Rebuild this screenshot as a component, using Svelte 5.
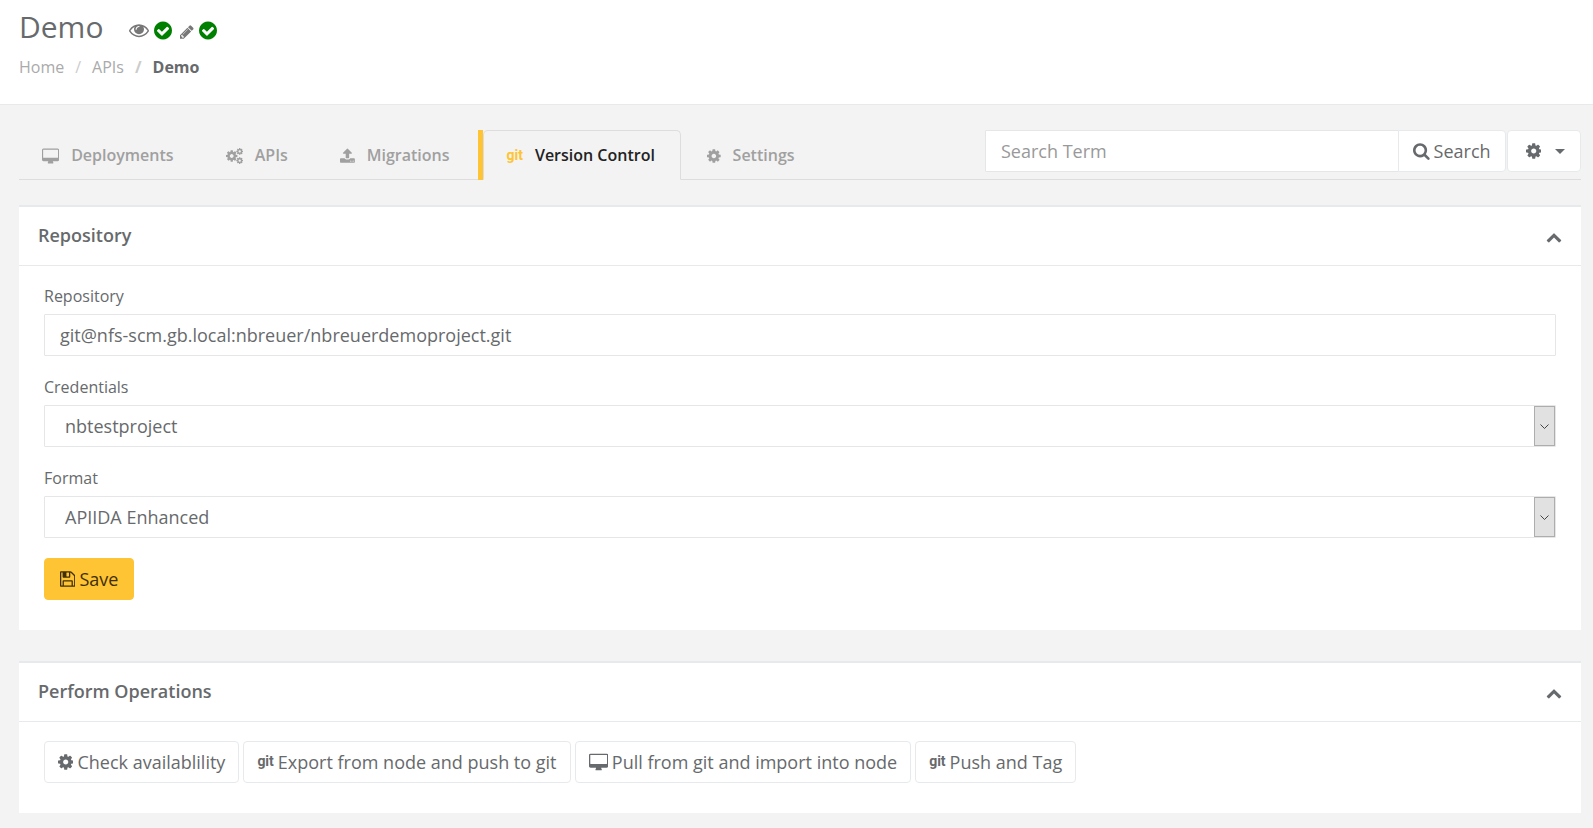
<script>
    const cog = 'M1152 896q0-106-75-181t-181-75-181 75-75 181 75 181 181 75 181-75 75-181zm512-109v222q0 12-8 23t-20 13l-185 28q-19 54-39 91 35 50 107 138 10 12 10 25t-9 23q-27 37-99 108t-94 71q-12 0-26-9l-138-108q-44 23-91 38-16 136-29 186-7 28-36 28h-222q-14 0-24.5-8.5t-11.5-21.5l-28-184q-49-16-90-37l-141 107q-10 9-25 9-14 0-25-11-126-114-165-168-7-10-7-23 0-12 8-23 15-21 51-66.5t54-70.5q-27-50-41-99l-183-27q-13-2-21-12.5t-8-23.5v-222q0-12 8-23t19-13l186-28q14-46 39-92-40-57-107-138-10-12-10-24 0-10 9-23 26-36 98.5-107.5t94.5-71.5q13 0 26 10l138 107q44-23 91-38 16-136 29-186 7-28 36-28h222q14 0 24.5 8.5t11.5 21.5l28 184q49 16 90 37l142-107q9-9 24-9 13 0 25 10 129 119 165 170 7 8 7 22 0 12-8 23-15 21-51 66.5t-54 70.5q26 50 41 98l183 28q13 2 21 12.5t8 23.5z';

    // x = left edge of the glyph, w = its advance, on a 1792 unit high grid
    const icons = {
        cog: { x: 128, w: 1536, d: cog },
        desktop: { x: 0, w: 1920, d: 'M1792 1056v-832q0-13-9.500-22.500t-22.500-9.500h-1600q-13 0-22.500 9.500t-9.500 22.500v832q0 13 9.500 22.500t22.500 9.500h1600q13 0 22.500-9.500t9.500-22.500zm128-832v1088q0 66-47 113t-113 47h-544q0 37 16 77.500t32 71 16 43.500q0 26-19 45t-45 19h-512q-26 0-45-19t-19-45q0-14 16-44t32-70 16-78h-544q-66 0-113-47t-47-113v-1088q0-66 47-113t113-47h1600q66 0 113 47t47 113z' },
        search: { x: 64, w: 1664, d: 'M1216 832q0-185-131.5-316.5t-316.5-131.5-316.5 131.5-131.5 316.5 131.5 316.5 316.5 131.5 316.5-131.5 131.5-316.5zm512 832q0 52-38 90t-90 38q-54 0-90-38l-343-342q-179 124-399 124-143 0-273.5-55.5t-225-150-150-225-55.5-273.5 55.5-273.5 150-225 225-150 273.5-55.5 273.5 55.5 225 150 150 225 55.5 273.5q0 220-124 399l343 343q37 37 37 90z' },
        check: { x: 128, w: 1536, d: 'M1412 734q0-28-18-46l-91-90q-19-19-45-19t-45 19l-408 407-226-226q-19-19-45-19t-45 19l-91 90q-18 18-18 46 0 27 18 45l362 362q19 19 45 19 27 0 46-19l543-543q18-18 18-45zm252 162q0 209-103 385.5t-279.5 279.5-385.5 103-385.5-103-279.5-279.5-103-385.5 103-385.5 279.5-279.5 385.5-103 385.5 103 279.5 279.5 103 385.5z' },
        eye: { x: 0, w: 1792, d: 'M1664 960q-152-236-381-353 61 104 61 225 0 185-131.5 316.5t-316.5 131.5-316.5-131.5-131.5-316.5q0-121 61-225-229 117-381 353 133 205 333.5 326.5t434.500 121.500 434.500-121.500 333.500-326.500zm-720-384q0-20-14-34t-34-14q-125 0-214.500 89.500t-89.500 214.500q0 20 14 34t34 14 34-14 14-34q0-86 61-147t147-61q20 0 34-14t14-34zm848 384q0 34-20 69-140 230-376.500 368.500t-499.500 138.500-499.500-139-376.500-368q-20-35-20-69t20-69q140-229 376.500-368t499.500-139 499.500 139 376.500 368q20 35 20 69z' },
        pencil: { x: 128, w: 1536, d: 'M491 1536l91-91-235-235-91 91v107h128v128h107zm523-928q0-22-22-22-10 0-17 7l-542 542q-7 7-7 17 0 22 22 22 10 0 17-7l542-542q7-7 7-17zm-54-192l416 416-832 832h-416v-416zm683 96q0 53-37 90l-166 166-416-416 166-165q36-38 90-38 53 0 91 38l235 234q37 39 37 91z' },
        upload: { x: 64, w: 1664, d: 'M1344 1472q0-26-19-45t-45-19-45 19-19 45 19 45 45 19 45-19 19-45zm256 0q0-26-19-45t-45-19-45 19-19 45 19 45 45 19 45-19 19-45zm128-224v320q0 40-28 68t-68 28h-1472q-40 0-68-28t-28-68v-320q0-40 28-68t68-28h427q21 56 70.500 92t110.500 36h256q61 0 110.500-36t70.500-92h427q40 0 68 28t28 68zm-325-648q-17 40-59 40h-256v448q0 26-19 45t-45 19h-256q-26 0-45-19t-19-45v-448h-256q-42 0-59-40-17-39 14-69l448-448q18-19 45-19t45 19l448 448q31 30 14 69z' },
        floppy: { x: 128, w: 1536, d: 'M512 1536h768v-384h-768v384zm896 0h128v-896q0-14-10-38.500t-20-34.500l-281-281q-10-10-34-20t-39-10v416q0 40-28 68t-68 28h-576q-40 0-68-28t-28-68v-416h-128v1280h128v-416q0-40 28-68t68-28h832q40 0 68 28t28 68v416zm-384-928v-320q0-13-9.500-22.500t-22.500-9.500h-192q-13 0-22.500 9.500t-9.500 22.500v320q0 13 9.500 22.500t22.500 9.500h192q13 0 22.500-9.500t9.500-22.500zm640 32v928q0 40-28 68t-68 28h-1344q-40 0-68-28t-28-68v-1344q0-40 28-68t68-28h928q40 0 88 20t76 48l280 280q28 28 48 76t20 88z' },
        chevronUp: { x: 0, w: 1792, d: 'M1683 1331l-166 165q-19 19-45 19t-45-19l-531-531-531 531q-19 19-45 19t-45-19l-166-165q-19-19-19-45.500t19-45.500l742-741q19-19 45-19t45 19l742 741q19 19 19 45.500t-19 45.500z' }
    };

    const tabs = [
        { id: 'deployments', label: 'Deployments', icon: 'desktop' },
        { id: 'apis', label: 'APIs', icon: 'cogs' },
        { id: 'migrations', label: 'Migrations', icon: 'upload' },
        { id: 'vcs', label: 'Version Control', icon: 'git' },
        { id: 'settings', label: 'Settings', icon: 'cog' }
    ];

    const operations = [
        { label: 'Check availablility', icon: 'cog' },
        { label: 'Export from node and push to git', icon: 'git' },
        { label: 'Pull from git and import into node', icon: 'desktop' },
        { label: 'Push and Tag', icon: 'git' }
    ];

    let activeTab = $state('vcs');
    let searchTerm = $state('');
    let open = $state({ repository: true, operations: true });
    let repo = $state({
        url: 'git@nfs-scm.gb.local:nbreuer/nbreuerdemoproject.git',
        credentials: 'nbtestproject',
        format: 'APIIDA Enhanced'
    });

    function selectTab(event, id) {
        event.preventDefault();
        activeTab = id;
    }
</script>

{#snippet icon(name)}
    {#if name === 'git'}
        <span class="git-icon" aria-hidden="true">git</span>
    {:else if name === 'cogs'}
        <svg class="icon" viewBox="0 0 1920 1792" aria-hidden="true">
            <path transform="translate(-107 149) scale(.833)" d={cog} />
            <path transform="translate(1088 -64) scale(.5)" d={cog} />
            <path transform="translate(1088 960) scale(.5)" d={cog} />
        </svg>
    {:else}
        <svg class="icon" viewBox="{icons[name].x} 0 {icons[name].w} 1792" aria-hidden="true">
            <path d={icons[name].d} />
        </svg>
    {/if}
{/snippet}

{#snippet selectArrow()}
    <span class="select-arrow" aria-hidden="true">
        <svg viewBox="0 0 9 5" width="9" height="5"><path d="M.5.5l4 4 4-4" /></svg>
    </span>
{/snippet}

<header class="page-heading">
    <div class="title-row">
        <h1>Demo</h1>
        <div class="permissions">
            {@render icon('eye')}
            <span class="granted">{@render icon('check')}</span>
            <span class="edit">{@render icon('pencil')}</span>
            <span class="granted">{@render icon('check')}</span>
        </div>
    </div>
    <nav aria-label="Breadcrumb">
        <ol class="breadcrumb">
            <li><a href="#home">Home</a></li>
            <li><a href="#apis">APIs</a></li>
            <li class="current">Demo</li>
        </ol>
    </nav>
</header>

<main>
    <div class="toolbar">
        <ul class="tabs">
            {#each tabs as tab (tab.id)}
                <li class:active={tab.id === activeTab}>
                    <a href="#{tab.id}" onclick={(e) => selectTab(e, tab.id)}>
                        {@render icon(tab.icon)}
                        {tab.label}
                    </a>
                </li>
            {/each}
        </ul>

        <form class="search-form" onsubmit={(e) => e.preventDefault()}>
            <input type="text" placeholder="Search Term" aria-label="Search Term" bind:value={searchTerm} />
            <button class="btn search-button" type="submit">{@render icon('search')} Search</button>
            <button class="btn options-button" type="button" aria-label="Search options">
                {@render icon('cog')}
                <span class="caret"></span>
            </button>
        </form>
    </div>

    <section class="panel">
        <div class="panel-title">
            <h2>Repository</h2>
            <button class="collapse" aria-label="Toggle Repository" onclick={() => (open.repository = !open.repository)}>
                {@render icon('chevronUp')}
            </button>
        </div>
        {#if open.repository}
            <form class="panel-body" onsubmit={(e) => e.preventDefault()}>
                <div class="form-group">
                    <label for="repo-url">Repository</label>
                    <input id="repo-url" type="text" bind:value={repo.url} />
                </div>
                <div class="form-group">
                    <label for="repo-credentials">Credentials</label>
                    <div class="select-wrap">
                        <select id="repo-credentials" bind:value={repo.credentials}>
                            <option>nbtestproject</option>
                        </select>
                        {@render selectArrow()}
                    </div>
                </div>
                <div class="form-group">
                    <label for="repo-format">Format</label>
                    <div class="select-wrap">
                        <select id="repo-format" bind:value={repo.format}>
                            <option>APIIDA Enhanced</option>
                        </select>
                        {@render selectArrow()}
                    </div>
                </div>
                <button class="btn btn-primary" type="submit">{@render icon('floppy')} Save</button>
            </form>
        {/if}
    </section>

    <section class="panel">
        <div class="panel-title">
            <h2>Perform Operations</h2>
            <button class="collapse" aria-label="Toggle Perform Operations" onclick={() => (open.operations = !open.operations)}>
                {@render icon('chevronUp')}
            </button>
        </div>
        {#if open.operations}
            <div class="panel-body operations">
                {#each operations as op (op.label)}
                    <button class="btn" type="button">{@render icon(op.icon)} {op.label}</button>
                {/each}
            </div>
        {/if}
    </section>
</main>

<style>
    :global(body) {
        background: #f3f3f3;
        color: #676a6c;
        font-family: "Open Sans", "Noto Sans", sans-serif;
        font-size: 16px;
        line-height: 23px;
    }

    h1,
    h2,
    ul,
    ol {
        margin: 0;
        padding: 0;
    }

    ul,
    ol {
        list-style: none;
    }

    a {
        color: inherit;
        text-decoration: none;
    }

    input,
    select,
    button {
        box-sizing: border-box;
        margin: 0;
        color: inherit;
        font-family: inherit;
        font-size: 18px;
        line-height: 24px;
    }

    button {
        cursor: pointer;
    }

    .icon {
        display: block;
        flex: none;
        height: 1em;
        fill: currentColor;
    }

    /* the git mark is a narrow bold wordmark */
    .git-icon {
        padding-bottom: 2px;
        font-family: Roboto, "Open Sans", sans-serif;
        font-size: 14px;
        font-weight: 700;
        line-height: 16px;
    }

    .page-heading {
        padding: 9px 19px 25px;
        background: #fff;
        border-bottom: 1px solid #e7eaec;
    }

    .title-row {
        display: flex;
        align-items: center;
        gap: 26px;
    }

    h1 {
        font-size: 30px;
        font-weight: 400;
        line-height: 36px;
    }

    .permissions {
        display: flex;
        align-items: center;
        gap: 5px;
        padding-top: 6px;
        color: #777;
        font-size: 20px;
    }

    .granted {
        color: green;
        font-size: 21px;
    }

    .edit {
        padding: 3px 0 0 3px;
        font-size: 16px;
    }

    .breadcrumb {
        display: flex;
        margin-top: 11px;
        color: #aaa;
    }

    .breadcrumb li + li::before {
        content: "/";
        padding: 0 11px;
        color: #ccc;
    }

    .breadcrumb .current {
        color: #676a6c;
        font-weight: 700;
    }

    main {
        padding: 25px 12px 14px 19px;
    }

    .toolbar {
        display: flex;
        align-items: flex-start;
        justify-content: space-between;
        margin-bottom: 25px;
        border-bottom: 1px solid #ddd;
    }

    .tabs {
        display: flex;
        gap: 3px;
        margin-bottom: -1px;
        color: #a0a0a0;
        font-weight: 600;
    }

    .tabs a {
        display: flex;
        align-items: center;
        gap: 12px;
        padding: 13px 25px 12px 22px;
        border: 1px solid transparent;
        border-radius: 5px 5px 0 0;
    }

    .tabs .active {
        border-left: 5px solid #fec433;
        color: #222;
    }

    .tabs .active a {
        background: #f3f3f3;
        border-color: #ddd #ddd #f3f3f3;
    }

    .tabs .git-icon {
        color: #fec433;
    }

    .search-form {
        display: flex;
        width: calc(50% - 185px);
    }

    .search-form input {
        flex: 1;
        min-width: 0;
    }

    .search-form input::placeholder {
        color: #999;
        opacity: 1;
    }

    input,
    select {
        width: 100%;
        height: 42px;
        padding: 0 15px;
        background: #fff;
        border: 1px solid #e5e6e7;
        border-radius: 1px;
        outline: none;
    }

    input:focus,
    select:focus {
        border-color: #fec433;
    }

    .btn {
        display: flex;
        align-items: center;
        gap: 4px;
        height: 42px;
        padding: 0 15px;
        background: #fff;
        border: 1px solid #e7eaec;
        border-radius: 4px;
        white-space: nowrap;
    }

    .search-button {
        margin-left: -1px;
        padding: 0 14px;
        border-radius: 0 4px 4px 0;
    }

    .options-button {
        gap: 14px;
        margin-left: 1px;
        padding: 0 15px 0 18px;
    }

    .caret {
        border: 5px solid transparent;
        border-top-color: currentColor;
        border-bottom: 0;
    }

    .btn-primary {
        background: #fec433;
        border-color: #fec433;
        color: #3f2f08;
    }

    .panel {
        background: #fff;
        border-top: 2px solid #e7eaec;
    }

    .panel + .panel {
        margin-top: 31px;
    }

    .panel-title {
        display: flex;
        align-items: center;
        justify-content: space-between;
        padding: 16px 19px 18px;
        border-bottom: 1px solid #e7eaec;
    }

    h2 {
        font-size: 18px;
        font-weight: 600;
        line-height: 24px;
    }

    .collapse {
        padding: 4px 0 0;
        background: none;
        border: 0;
        font-size: 16px;
    }

    .panel-body {
        padding: 19px 25px 30px;
    }

    .form-group {
        margin-bottom: 20px;
    }

    label {
        display: block;
        margin-bottom: 6px;
    }

    .select-wrap {
        position: relative;
    }

    select {
        padding: 0 36px 0 20px;
        appearance: none;
    }

    .select-arrow {
        position: absolute;
        top: 1px;
        right: 1px;
        bottom: 1px;
        display: flex;
        align-items: center;
        justify-content: center;
        width: 19px;
        background: #e1e1e1;
        border: 1px solid #adadad;
        pointer-events: none;
    }

    .select-arrow path {
        fill: none;
        stroke: #444;
    }

    .operations {
        display: flex;
        flex-wrap: wrap;
        gap: 4px;
    }

    .operations .btn {
        padding: 0 13px;
    }
</style>
